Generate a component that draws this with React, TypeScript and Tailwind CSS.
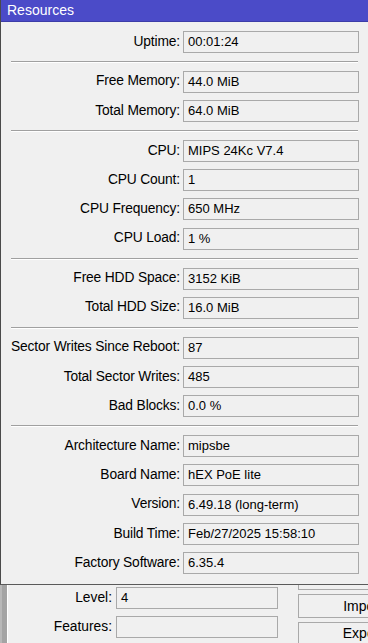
import React from 'react';

type Row = { label: string; value: string };

// 区切り線で分けたグループ
const GROUPS: Row[][] = [
  [{ label: 'Uptime:', value: '00:01:24' }],
  [
    { label: 'Free Memory:', value: '44.0 MiB' },
    { label: 'Total Memory:', value: '64.0 MiB' },
  ],
  [
    { label: 'CPU:', value: 'MIPS 24Kc V7.4' },
    { label: 'CPU Count:', value: '1' },
    { label: 'CPU Frequency:', value: '650 MHz' },
    { label: 'CPU Load:', value: '1 %' },
  ],
  [
    { label: 'Free HDD Space:', value: '3152 KiB' },
    { label: 'Total HDD Size:', value: '16.0 MiB' },
  ],
  [
    { label: 'Sector Writes Since Reboot:', value: '87' },
    { label: 'Total Sector Writes:', value: '485' },
    { label: 'Bad Blocks:', value: '0.0 %' },
  ],
  [
    { label: 'Architecture Name:', value: 'mipsbe' },
    { label: 'Board Name:', value: 'hEX PoE lite' },
    { label: 'Version:', value: '6.49.18 (long-term)' },
    { label: 'Build Time:', value: 'Feb/27/2025 15:58:10' },
    { label: 'Factory Software:', value: '6.35.4' },
  ],
];

function Field({ label, value }: Row) {
  return (
    <div className="flex items-center h-[22px]">
      <span className="w-[180px] shrink-0 text-right pr-[1px] whitespace-nowrap text-[13.8px] tracking-[-0.15px]">{label}</span>
      <span className="ml-[2px] w-[176px] h-[22px] border border-[#a9a9a9] bg-[#f0f0f0] pl-[4px] leading-[20px] whitespace-nowrap overflow-hidden">
        {value}
      </span>
    </div>
  );
}

export default function App() {
  return (
    <div
      className="w-[368px] h-[643px] overflow-hidden bg-[#f0f0f0] text-[13px] text-black relative"
      style={{ fontFamily: '"Liberation Sans", Arial, sans-serif' }}
    >
      {/* Resources ウィンドウ */}
      <div className="border-l border-[#4a4a4a] border-b border-b-[#5a5a5a]">
        <div className="h-[22px] bg-[#4b4bc8] border-b border-[#3c3ca8] text-white text-[14px] pl-[6px] leading-[21px]">
          Resources
        </div>
        <div className="pt-[9px] pb-[10px] flex flex-col">
          {GROUPS.map((g, gi) => (
            <React.Fragment key={gi}>
              {gi > 0 && (
                <div className="ml-[10px] w-[347px] h-[2px] my-[7.9px] border-t border-[#a0a0a0] border-b border-b-white" />
              )}
              <div className="flex flex-col gap-[7.3px]">
                {g.map((r) => (
                  <Field key={r.label} {...r} />
                ))}
              </div>
            </React.Fragment>
          ))}
        </div>
      </div>

      {/* 背後のウィンドウ */}
      <div className="flex h-[60px]">
        <div className="w-[8px] shrink-0 bg-[#a4a4a4] border-l-2 border-l-[#b8b8b8] border-r border-r-white" />
        <div className="flex-1 flex">
          <div className="flex flex-col gap-[7px] pt-[2px] w-[271px] shrink-0">
            <div className="flex items-center h-[22px]">
              <span className="w-[105px] text-right pr-[1px] text-[13.8px]">Level:</span>
              <span className="ml-[3px] w-[162px] h-[22px] border border-[#a9a9a9] pl-[4px] leading-[20px]">4</span>
            </div>
            <div className="flex items-center h-[22px]">
              <span className="w-[105px] text-right pr-[1px] text-[13.8px]">Features:</span>
              <span className="ml-[3px] w-[162px] h-[22px] border border-[#a9a9a9] pl-[4px] leading-[20px]" />
            </div>
          </div>
          <div className="flex flex-col gap-[4px] ml-[19px] shrink-0">
            <div className="w-[130px] h-[6px] border border-t-0 border-[#a9a9a9]" />
            <div className="w-[130px] h-[27px] border border-[#a9a9a9] bg-[#f0f0f0] flex items-center justify-center text-[14px]">
              Import
            </div>
            <div className="w-[130px] h-[27px] border border-[#a9a9a9] bg-[#f0f0f0] flex items-center justify-center text-[14px]">
              Export
            </div>
          </div>
        </div>
      </div>
    </div>
  );
}
